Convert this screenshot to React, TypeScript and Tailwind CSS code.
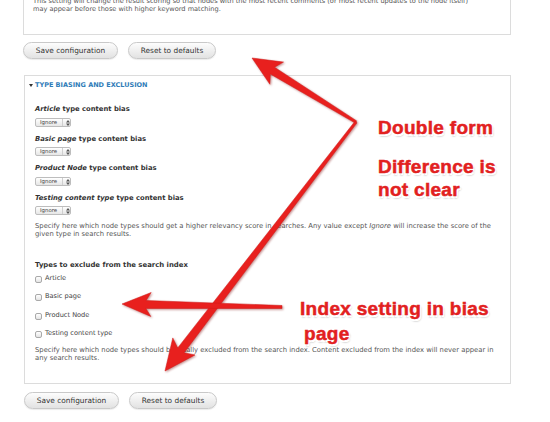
import type { ReactNode } from "react";

type Pt = [number, number];

// builds a tapered arrow polygon from tail to tip
function arrowPoints(tail: Pt, tip: Pt, headLen: number, headHalf: number, w0: number, w1: number) {
  const dx = tip[0] - tail[0];
  const dy = tip[1] - tail[1];
  const len = Math.hypot(dx, dy);
  const ux = dx / len;
  const uy = dy / len;
  const nx = -uy;
  const ny = ux;
  const bx = tip[0] - ux * headLen;
  const by = tip[1] - uy * headLen;
  const pts: Pt[] = [
    [tail[0] + (nx * w0) / 2, tail[1] + (ny * w0) / 2],
    [bx + (nx * w1) / 2, by + (ny * w1) / 2],
    [bx - ux * 5 + nx * headHalf, by - uy * 5 + ny * headHalf],
    tip,
    [bx - ux * 5 - nx * headHalf, by - uy * 5 - ny * headHalf],
    [bx - (nx * w1) / 2, by - (ny * w1) / 2],
    [tail[0] - (nx * w0) / 2, tail[1] - (ny * w0) / 2],
  ];
  return pts.map((p) => `${p[0].toFixed(1)},${p[1].toFixed(1)}`).join(" ");
}

const arrows = [
  arrowPoints([356, 122], [252, 58], 24, 13, 2.5, 8),
  arrowPoints([356, 122], [165, 371], 26, 14, 2.5, 8),
  arrowPoints([282, 307], [122, 304], 24, 12, 3, 8),
];

function Button({ children, w }: { children: ReactNode; w: string }) {
  return (
    <div
      className={`flex h-[17px] ${w} items-center justify-center rounded-full border border-[#c9c9c9] bg-gradient-to-b from-[#fdfdfd] to-[#e2e2e2] text-[7.4px] text-[#333] shadow-[0_1px_1px_rgba(0,0,0,0.08)]`}
    >
      {children}
    </div>
  );
}

function Buttons({ className }: { className: string }) {
  return (
    <div className={`flex gap-[10px] ${className}`}>
      <Button w="w-[95px]">Save configuration</Button>
      <Button w="w-[88px]">Reset to defaults</Button>
    </div>
  );
}

function Select({ className }: { className: string }) {
  return (
    <div
      className={`flex h-[9px] w-[36px] items-center rounded-[2px] border border-[#bdbdbd] bg-gradient-to-b from-[#ffffff] to-[#e6e6e6] text-[5.4px] leading-none text-[#444] ${className}`}
    >
      <span className="pl-[4px] pr-[5px]">Ignore</span>
      <span className="flex h-full items-center border-l border-[#cfcfcf] pl-[3px]">
        <svg width="4" height="6" viewBox="0 0 4 6">
          <path d="M2 0 L4 2.4 L0 2.4 Z M2 6 L4 3.6 L0 3.6 Z" fill="#555" />
        </svg>
      </span>
    </div>
  );
}

function Label({ em, className }: { em: string; className: string }) {
  return (
    <div className={`h-[8px] text-[6.8px] leading-[8px] font-bold text-[#333] ${className}`}>
      <i>{em}</i> type content bias
    </div>
  );
}

function Check({ label, className }: { label: string; className: string }) {
  return (
    <div className={`flex h-[8px] items-center gap-[3px] text-[6.6px] text-[#444] ${className}`}>
      <span className="h-[7px] w-[7px] rounded-[2px] border border-[#a9a9a9] bg-gradient-to-b from-white to-[#e4e4e4]" />
      <span>{label}</span>
    </div>
  );
}

const redText =
  "font-['Liberation_Sans',Arial,sans-serif] font-bold tracking-[0.3px] text-[#e2211f] [-webkit-text-stroke:0.5px_#e2211f] [text-shadow:-1.5px_-1.5px_0_#fff,1.5px_-1.5px_0_#fff,-1.5px_1.5px_0_#fff,1.5px_1.5px_0_#fff,0_0_2px_#fff,1px_2px_2px_rgba(0,0,0,0.45)]";

export default function App() {
  return (
    <div className="relative h-[422px] w-[550px] overflow-hidden bg-white font-['DejaVu_Sans',sans-serif]">
      {/* upper fieldset, cut off at the top */}
      <div className="mt-[-3px] ml-[23px] w-[488px] border-x border-b border-[#dcdcdc] px-[9px] pb-[21px] text-[6.6px] leading-[8px] whitespace-nowrap text-[#555]">
        This setting will change the result scoring so that nodes with the most recent comments (or most recent updates to the node itself)
        <br />
        may appear before those with higher keyword matching.
      </div>

      <Buttons className="mt-[7px] ml-[23px]" />

      {/* type biasing fieldset */}
      <div className="mt-[16px] ml-[24px] w-[487px] border border-[#dcdcdc] pt-[5px] pr-[8px] pb-[21px] pl-[10px]">
        <div className="ml-[-6px] flex h-[8px] items-center gap-[2px] text-[6.5px] leading-[8px] font-bold text-[#2f7cb8] uppercase">
          <svg width="4" height="3" viewBox="0 0 4 3">
            <path d="M0 0 L4 0 L2 3 Z" fill="#333" />
          </svg>
          <span>Type biasing and exclusion</span>
        </div>

        <Label em="Article" className="mt-[16px]" />
        <Select className="mt-[5px]" />
        <Label em="Basic page" className="mt-[8px]" />
        <Select className="mt-[4px]" />
        <Label em="Product Node" className="mt-[8px]" />
        <Select className="mt-[5px]" />
        <Label em="Testing content type" className="mt-[8px]" />
        <Select className="mt-[4px]" />

        <div className="mt-[8px] text-[6.8px] leading-[7.5px] whitespace-nowrap text-[#555]">
          Specify here which node types should get a higher relevancy score in searches. Any value except <i>Ignore</i> will increase the score of the
          <br />
          given type in search results.
        </div>

        <div className="mt-[23px] h-[8px] text-[6.9px] leading-[8px] font-bold text-[#333]">
          Types to exclude from the search index
        </div>
        <Check label="Article" className="mt-[6px]" />
        <Check label="Basic page" className="mt-[10px]" />
        <Check label="Product Node" className="mt-[11px]" />
        <Check label="Testing content type" className="mt-[10px]" />

        <div className="mt-[9px] text-[6.8px] leading-[7.5px] whitespace-nowrap text-[#555]">
          Specify here which node types should be totally excluded from the search index. Content excluded from the index will never appear in
          <br />
          any search results.
        </div>
      </div>

      <Buttons className="mt-[8px] ml-[24px]" />

      {/* annotations drawn over the screenshot */}
      <svg
        className="pointer-events-none absolute top-0 left-0 drop-shadow-[1px_1px_1px_rgba(120,0,0,0.45)]"
        width="550"
        height="422"
        viewBox="0 0 550 422"
      >
        {arrows.map((p, i) => (
          <polygon key={i} points={p} fill="#e8201e" stroke="#d01a18" strokeWidth="0.5" strokeLinejoin="round" />
        ))}
      </svg>

      <div className={`absolute top-[117px] left-[378px] text-[19px] leading-[22px] ${redText}`}>Double form</div>
      <div className={`absolute top-[155px] left-[378px] text-[19px] leading-[23px] ${redText}`}>
        Difference is
        <br />
        not clear
      </div>
      <div className={`absolute top-[296px] left-[300px] text-[19px] leading-[25px] ${redText}`}>
        Index setting in bias
        <br />
        <span className="ml-[4px]">page</span>
      </div>
    </div>
  );
}
